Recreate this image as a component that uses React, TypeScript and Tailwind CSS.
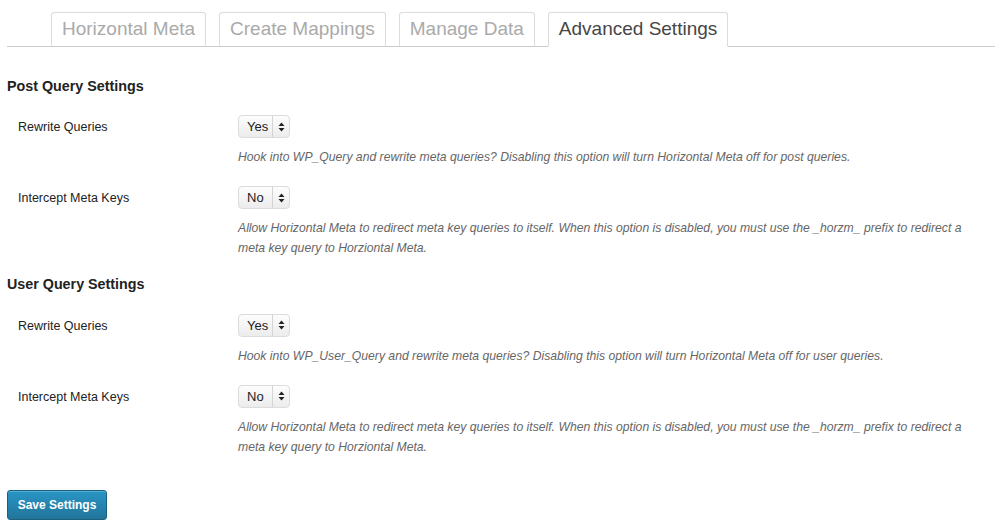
import { Fragment } from "react";

const tabs = ["Horizontal Meta", "Create Mappings", "Manage Data", "Advanced Settings"];

type Row = { label: string; value: string; desc: string[] };

const sections: { title: string; rows: Row[] }[] = [
  {
    title: "Post Query Settings",
    rows: [
      {
        label: "Rewrite Queries",
        value: "Yes",
        desc: [
          "Hook into WP_Query and rewrite meta queries? Disabling this option will turn Horizontal Meta off for post queries.",
        ],
      },
      {
        label: "Intercept Meta Keys",
        value: "No",
        desc: [
          "Allow Horizontal Meta to redirect meta key queries to itself. When this option is disabled, you must use the _horzm_ prefix to redirect a",
          "meta key query to Horziontal Meta.",
        ],
      },
    ],
  },
  {
    title: "User Query Settings",
    rows: [
      {
        label: "Rewrite Queries",
        value: "Yes",
        desc: [
          "Hook into WP_User_Query and rewrite meta queries? Disabling this option will turn Horizontal Meta off for user queries.",
        ],
      },
      {
        label: "Intercept Meta Keys",
        value: "No",
        desc: [
          "Allow Horizontal Meta to redirect meta key queries to itself. When this option is disabled, you must use the _horzm_ prefix to redirect a",
          "meta key query to Horziontal Meta.",
        ],
      },
    ],
  },
];

function FakeSelect({ value }: { value: string }) {
  return (
    <div className="flex h-[23px] w-[52px] items-stretch rounded-[4px] border border-[#dcdcdc] bg-gradient-to-b from-[#fdfdfd] to-[#ececec] text-[13px] text-[#222]">
      <span className="flex flex-1 items-center pl-[8px]">{value}</span>
      <span className="flex w-[17px] items-center justify-center border-l border-[#d4d4d4]">
        <svg width="7" height="10" viewBox="0 0 7 10">
          <path d="M3.5 0.5 L6.5 4 L0.5 4 Z" fill="#222" />
          <path d="M3.5 9.5 L6.5 6 L0.5 6 Z" fill="#222" />
        </svg>
      </span>
    </div>
  );
}

export default function App() {
  return (
    <div className="h-[531px] w-[1004px] overflow-hidden bg-white font-['Liberation_Sans',Arial,sans-serif] text-[#333]">
      <div className="ml-[7px] mr-[9px] flex items-end gap-[13px] border-b border-[#ccc] pl-[44px] pt-[12px]">
        {tabs.map((t, i) => (
          <div
            key={t}
            className={`-mb-px flex h-[35px] items-center rounded-t-[3px] border border-[#dcdcdc] px-[10px] text-[19px] ${
              i === 3 ? "border-b-white border-[#ccc] bg-white text-[#464646]" : "border-b-[#ccc] bg-white text-[#aaa]"
            }`}
          >
            {t}
          </div>
        ))}
      </div>

      <div className="pl-[7px]">
        {sections.map((s, si) => (
          <Fragment key={s.title}>
            <h3 className={`text-[14.3px] font-bold text-[#222] ${si === 0 ? "mt-[29px]" : "mt-[16px]"}`}>{s.title}</h3>
            <div className="mt-[18px] flex flex-col gap-[19px]">
              {s.rows.map((r) => (
                <div key={r.label} className="grid grid-cols-[231px_1fr]">
                  <div className="pl-[11px] pt-[3px] text-[12.5px] text-[#222]">{r.label}</div>
                  <div>
                    <FakeSelect value={r.value} />
                    <div className="mt-[9px] text-[12.2px] italic leading-[20px] text-[#666]">
                      {r.desc.map((d) => (
                        <div key={d}>{d}</div>
                      ))}
                    </div>
                  </div>
                </div>
              ))}
            </div>
          </Fragment>
        ))}

        <button className="mt-[33px] h-[30px] w-[100px] rounded-[3px] border border-[#1b607f] bg-gradient-to-b from-[#2a95c5] to-[#21759b] text-[12px] font-bold text-white shadow-[inset_0_1px_0_rgba(120,200,230,0.5)]">
          Save Settings
        </button>
      </div>
    </div>
  );
}
